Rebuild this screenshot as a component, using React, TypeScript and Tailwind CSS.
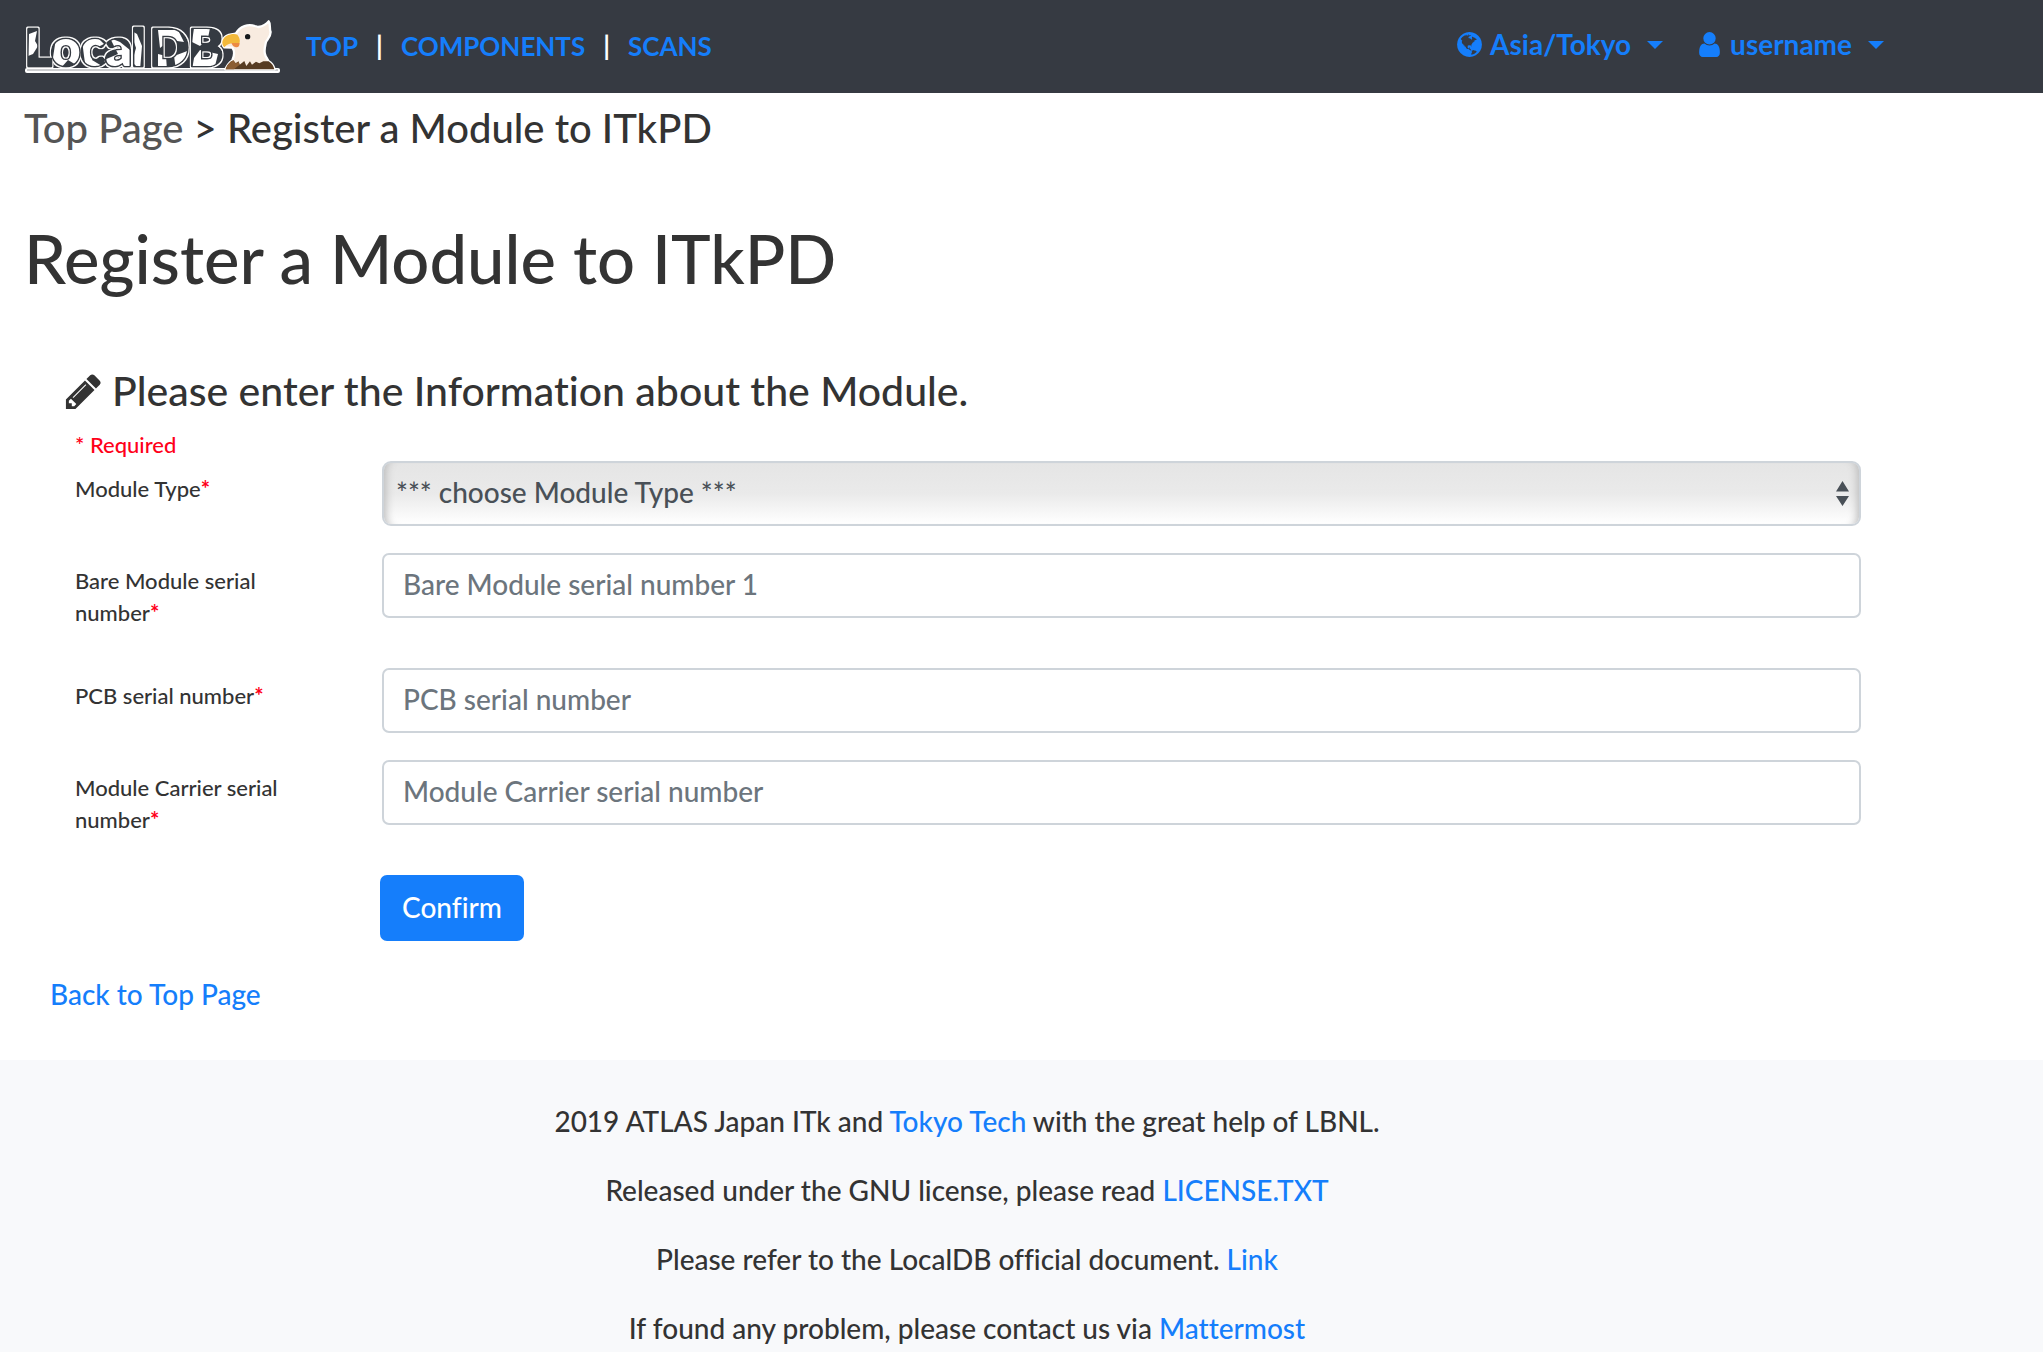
import type { ReactNode } from "react";

const GLOBE =
  "M896 128q209 0 385.5 103t279.5 279.5 103 385.5-103 385.5-279.5 279.5-385.5 103-385.5-103-279.5-279.5-103-385.5 103-385.5 279.5-279.5 385.5-103zm274 521q-2 1-9.5 9.5t-13.5 9.5q2 0 4.5-5t5-11 3.5-7q6-7 22-15 14-6 52-12 34-8 51 11-2-2 9.5-13t14.5-12q3-2 15-4.5t15-7.5l2-22q-12 1-17.5-7t-6.5-21q0 2-6 8 0-7-4.5-8t-11.5 1-9 1q-10-3-15-7.5t-8-16.5-4-15q-2-5-9.5-11t-9.5-10q-1-2-2.5-5.5t-3-6.5-4-5.5-5.5-2.5-7 5-7.5 10-4.5 5q-3-2-6-1.5t-4.5 1-4.5 3-5 3.5q-3 2-8.5 3t-8.5 2q15-5-1-11-10-4-16-3 9-4 7.5-12t-8.5-14h5q-1-4-8.5-8.5t-17.5-8.5-13-6q-8-5-34-9.5t-33-.5q-5 6-4.5 10.5t4 14 3.5 12.5q1 6-5.5 13t-6.5 12q0 7 14 15.5t10 21.5q-3 8-16 16t-16 12q-5 8-1.5 18.5t10.5 16.5q2 2 1.5 4t-3.5 4.5-5.5 4-6.5 3.5l-3 2q-11 5-20.5-6t-13.5-26q-7-25-16-30-23-8-29 1-5-13-41-26-25-9-58-4 6-1 0-15-7-15-19-12 3-6 4-17.5t1-13.5q3-13 12-23 1-1 7-8.5t9.5-13.5.5-6q35 4 50-11 5-5 11.5-17t10.5-17q9-6 14-5.5t14.5 5.5 14.5 5q14 1 15.5-11t-7.5-20q12 1 3-17-4-7-8-9-12-4-27 5-8 4 2 8-1-1-9.5 10.5t-16.5 17.5-16-5q-1-1-5.5-13.5t-9.5-13.5q-8 0-16 15 3-8-11-15t-24-8q19-12-8-27-7-4-20.5-5t-19.5 4q-5 7-5.5 11.5t5 8 10.5 5.5 11.5 4 8.5 3q14 10 8 14-2 1-8.5 3.5t-11.5 4.5-6 4q-3 4 0 14t-2 14q-5-5-9-17.5t-7-16.5q7 9-25 6l-10-1q-4 0-16 2t-20.5 1-13.5-8q-4-8 0-20 1-4 4-2-4-3-11-9.5t-10-8.5q-46 15-94 41 6 1 12-1 5-2 13-6.5t10-5.5q34-14 42-7l5-5q14 16 20 25-7-4-30-1-20 6-22 12 7 12 5 18-4-3-11.5-10t-14.5-11-15-5q-16 0-22 1-146 80-235 222 7 7 12 8 4 1 5 9t2.5 11 11.5-3q9 8 3 19 1-1 44 27 19 17 21 21 3 11-10 18-1-2-9-9t-9-4q-3 5 .5 18.5t10.5 12.5q-7 0-9.5 16t-2.5 35.5-1 23.5l2 1q-3 12 5.5 34.5t21.5 19.5q-13 3 20 43 6 8 8 9 3 2 12 7.5t15 10 10 10.5q4 5 10 22.5t14 23.5q-2 6 9.5 20t10.5 23q-1 0-2.5 1t-2.5 1q3 7 15.5 14t15.5 13q1 3 2 10t3 11 8 2q2-20-24-62-15-25-17-29-3-5-5.5-15.5t-4.5-14.5q2 0 6 1.5t8.5 3.5 7.5 4 2 3q-3 7 2 17.5t12 18.5 17 19 12 13q6 6 14 19.5t0 13.5q9 0 20 10t17 20q5 8 8 26t5 24q2 7 8.5 13.5t12.5 9.5l16 8 13 7q5 2 18.5 10.5t21.5 11.5q10 4 16 4t14.5-2.5 13.5-3.5q15-2 29 15t21 21q36 19 55 11-2 1 .5 7.5t8 15.5 9 14.5 5.5 8.5q5 6 18 15t18 15q6-4 7-9-3 8 7 20t18 10q14-3 14-32-31 15-49-18 0-1-2.5-5.5t-4-8.5-2.5-8.5 0-7.5 5-3q9 0 10-3.5t-2-12.5-4-13q-1-8-11-20t-12-15q-5 9-16 8t-16-9q0 1-1.5 5.5t-1.5 6.5q-13 0-15-1 1-3 2.5-17.5t3.5-22.5q1-4 5.5-12t7.5-14.5 4-12.5-4.5-9.5-17.5-2.5q-19 1-26 20-1 3-3 10.5t-5 11.5-9 7q-7 3-24 2t-24-5q-13-8-22.5-29t-9.5-37q0-10 2.5-26.5t3-25-5.5-24.5q3-2 9-9.5t10-10.5q2-1 4.5-1.5t4.5 0 4-1.5 3-6q-1-1-4-3-3-3-4-3 7 3 28.5-1.5t27.5 1.5q15 11 22-2 0-1-2.5-9.5t-.5-13.5q5 27 29 9 3 3 15.5 5t17.5 5q3 2 7 5.5t5.5 4.5 5-.5 8.5-6.5q10 14 12 24 11 40 19 44 7 3 11 2t4.5-9.5 0-14-1.5-12.5l-1-8v-18l-1-8q-15-3-18.5-12t1.5-18.5 15-18.5q1-1 8-3.5t15.5-6.5 12.5-8q21-19 15-35 7 0 11-9-1 0-5-3t-7.5-5-4.5-2q9-5 2-16 5-3 7.5-11t7.5-10q9 12 21 2 8-8 1-16 5-7 20.5-10.5t18.5-9.5q7 2 8-2t1-12 3-12q4-5 15-9t13-5l17-11q3-4 0-4 18 2 31-11 10-11-6-20 3-6-3-9.5t-15-5.5q3-1 11.5-.5t10.5-1.5q15-10-7-16-17-5-43 12zm-163 877q206-36 351-189-3-3-12.5-4.5t-12.5-3.5q-18-7-24-8 1-7-2.5-13t-8-9-12.5-8-11-7q-2-2-7-6t-7-5.5-7.5-4.5-8.5-2-10 1l-3 1q-3 1-5.5 2.5t-5.5 3-4 3 0 2.5q-21-17-36-22-5-1-11-5.5t-10.5-7-10-1.5-11.5 7q-5 5-6 15t-2 13q-7-5 0-17.5t2-18.5q-3-6-10.5-4.5t-12 4.5-11.5 8.5-9 6.5-8.5 5.5-8.5 7.5q-3 4-6 12t-5 11q-2-4-11.5-6.5t-9.5-5.5q2 10 4 35t5 38q7 31-12 48-27 25-29 40-4 22 12 26 0 7-8 20.5t-7 21.5q0 6 2 16z";

const USER =
  "M1536 1399q0 109-62.5 187t-150.5 78h-854q-88 0-150.5-78t-62.5-187q0-85 8.5-160.5t31.5-152 58.5-131 94-89 134.5-34.5q131 128 313 128t313-128q76 0 134.5 34.5t94 89 58.5 131 31.5 152 8.5 160.5zM1280 512q0 159-112.5 271.5t-271.5 112.5-271.5-112.5-112.5-271.5 112.5-271.5 271.5-112.5 271.5 112.5 112.5 271.5z";

const PENCIL =
  "M491 1536l91-91-235-235-91 91v107h128v128h107zM1014 608q0-22-22-22-10 0-17 7l-542 542q-7 7-7 17 0 22 22 22 10 0 17-7l542-542q7-7 7-17zM960 416l416 416-832 832h-416v-416zM1643 512q0 53-37 90l-166 166-416-416 166-165q36-38 90-38 53 0 91 38l235 234q37 39 37 91z";

function Logo() {
  return (
    <svg viewBox="24 16 258 58" className="h-[58px] w-[258px]" aria-hidden="true">
      <defs>
        <pattern id="patches" width="256" height="60" x="24" y="14" patternUnits="userSpaceOnUse">
          <rect width="256" height="60" fill="#363a42" />
          <path
            d="M5 18L13 15L11 25L14 30L9 38L4 40ZM32 22L50 18L57 30L54 50L44 44L36 53L28 48ZM58 24L72 20L80 28L72 32L68 44L78 50L62 54L60 40ZM86 22L96 26L106 34L106 53L96 50L84 54L80 44L94 38ZM106 14L113 18L118 30L116 54L108 46L112 32ZM134 14L154 14L160 26L146 24L136 32ZM150 40L166 34L162 48L152 54ZM134 38L142 40L143 54L134 54ZM170 12L186 12L184 22L176 30L168 26ZM176 34L194 38L190 54L168 54L170 42Z"
            fill="#fff"
          />
        </pattern>
        <filter id="outline" x="-5%" y="-20%" width="110%" height="140%">
          <feMorphology in="SourceAlpha" operator="dilate" radius="1" result="grown" />
          <feFlood floodColor="#fff" />
          <feComposite in2="grown" operator="in" result="edge" />
          <feMerge>
            <feMergeNode in="edge" />
            <feMergeNode in="SourceGraphic" />
          </feMerge>
        </filter>
      </defs>
      <g
        fontFamily="Lato, sans-serif"
        fontWeight="800"
        fill="url(#patches)"
        stroke="#363a42"
        strokeWidth="3"
        strokeLinejoin="round"
        paintOrder="stroke"
        filter="url(#outline)"
      >
        <text x="25" y="64" fontSize="51">
          Local
        </text>
        <text x="150" y="64" fontSize="51">
          DB
        </text>
      </g>
      <rect x="25" y="66" width="255" height="5" rx="2" fill="#fff" />
      <path d="M27 68h251" stroke="#9b9da1" strokeWidth="1" />
      <g transform="scale(.3333)">
        <path
          d="M676 202C683 186 690 180 697 175C704 160 705 148 697 137L673 136C663 126 666 110 679 102C690 95 702 98 708 94C720 72 745 65 765 72L775 75C790 72 800 66 806 58C813 66 807 80 812 90C812 105 802 112 798 120C794 138 790 150 797 162L806 178C816 184 821 192 824 202Z"
          fill="#f8ebe0"
          stroke="#fff"
          strokeWidth="7"
          strokeLinejoin="round"
        />
        <path d="M677 202C683 186 690 180 700 175L707 184L716 178L719 188L733 177L739 192L750 178L756 188L768 179L778 184L790 178L806 178C816 184 821 192 823 202Z" fill="#573b22" />
        <path d="M677 202C683 186 690 180 700 175L707 184L716 180L719 188L702 202Z" fill="#8b5d33" />
        <path d="M673 136C663 126 666 110 679 102C692 95 706 95 712 98C718 105 722 116 718 124C700 122 684 122 673 136Z" fill="#f2b93b" />
        <path d="M694 123L719 123C719 132 715 137 708 136C701 135 697 130 694 123Z" fill="#ec8a43" />
        <circle cx="743" cy="104" r="8" fill="#15191c" />
      </g>
    </svg>
  );
}

function Icon({ d, className }: { d: string; className: string }) {
  return (
    <svg viewBox="0 0 1792 1792" fill="currentColor" className={className} aria-hidden="true">
      <path d={d} />
    </svg>
  );
}

function NavMenu({ icon, children }: { icon: ReactNode; children: ReactNode }) {
  return (
    <button type="button" className="flex items-center text-[#157efb]">
      {icon}
      <span>{children}</span>
      <span className="ml-4 border-x-8 border-t-8 border-x-transparent border-t-[#157efb]" />
    </button>
  );
}

function Row({ id, label, children }: { id: string; label: string; children: ReactNode }) {
  return (
    <div className="flex items-start">
      <div className="w-[307px] shrink-0 py-3 pr-16 text-[22px] leading-8">
        <label htmlFor={id}>
          {label}
          <span className="font-bold text-[#ff0019]">*</span>
        </label>
      </div>
      <div className="relative min-w-0 grow">{children}</div>
    </div>
  );
}

function TextField({ id, placeholder }: { id: string; placeholder: string }) {
  return (
    <input
      id={id}
      type="text"
      placeholder={placeholder}
      className="block h-[65px] w-full rounded-[7px] border-2 border-[#ced4da] bg-white px-[19px] pb-1 text-[#495057] placeholder:text-[#6c757d]"
    />
  );
}

function A({ children }: { children: ReactNode }) {
  return (
    <a href="#" className="text-[#157efb]">
      {children}
    </a>
  );
}

export default function App() {
  return (
    <div className="flex min-h-screen flex-col bg-white font-['Lato',sans-serif] text-[28px] leading-[43px] font-medium text-[#333] [font-variant-ligatures:none]">
      <nav className="flex h-[93px] items-center bg-[#363a42] pr-[159px] pl-6 font-bold">
        <a href="#" aria-label="LocalDB">
          <Logo />
        </a>
        <div className="ml-6 flex items-center gap-[18px] text-[26px] text-white">
          <A>TOP</A>
          <span>|</span>
          <A>COMPONENTS</A>
          <span>|</span>
          <A>SCANS</A>
        </div>
        <div className="mb-1 ml-auto flex items-center gap-8">
          <NavMenu icon={<Icon d={GLOBE} className="mr-1.5 size-[29px]" />}>Asia/Tokyo</NavMenu>
          <NavMenu icon={<Icon d={USER} className="mr-1.5 size-[29px]" />}>username</NavMenu>
        </div>
      </nav>

      <main className="pb-11">
        <div className="px-6 pt-[11px] text-[40px] leading-[48px]">
          <a href="#" className="text-[#555]">
            Top Page
          </a>{" "}
          &gt; Register a Module to ITkPD
        </div>
        <h1 className="mt-[66px] px-6 text-[67px] leading-[80px]">Register a Module to ITkPD</h1>

        <form className="mt-[69px] mr-[182px] ml-[75px]" onSubmit={(e) => e.preventDefault()}>
          <h2 className="-ml-3 flex items-center text-[41px] leading-[48px]">
            <Icon d={PENCIL} className="mr-2 size-[41px]" />
            Please enter the Information about the Module.
          </h2>
          <p className="mt-3.5 text-[22px] leading-8 text-[#ff0019]">* Required</p>
          <div className="flex flex-col gap-[27px]">
            <Row id="type" label="Module Type">
              <select
                id="type"
                className="block h-[65px] w-full appearance-none rounded-[9px] border-2 border-[#ced4da] bg-linear-to-b from-[#e5e5e5] via-[#eaeaea] to-white px-3 pb-0.5 text-[#495057] shadow-[inset_10px_0_8px_-8px_#bbb,inset_-10px_0_8px_-8px_#bbb]"
              >
                <option>*** choose Module Type ***</option>
              </select>
              <svg
                viewBox="0 0 13 25"
                className="pointer-events-none absolute top-5 right-3 h-[25px] w-[13px]"
                fill="#495057"
                aria-hidden="true"
              >
                <path d="M6.500 0L13 10.500H0ZM6.500 25L13 15H0Z" />
              </svg>
            </Row>
            <Row id="bare" label="Bare Module serial number">
              <TextField id="bare" placeholder="Bare Module serial number 1" />
            </Row>
            <Row id="pcb" label="PCB serial number">
              <TextField id="pcb" placeholder="PCB serial number" />
            </Row>
            <Row id="carrier" label="Module Carrier serial number">
              <TextField id="carrier" placeholder="Module Carrier serial number" />
            </Row>
          </div>
          <button
            type="submit"
            className="mt-[27px] ml-[305px] block h-[66px] rounded-[7px] bg-[#157efb] px-[22px] pb-0.5 text-white"
          >
            Confirm
          </button>
        </form>
        <div className="mt-8 ml-[50px]">
          <A>Back to Top Page</A>
        </div>
      </main>

      <footer className="flex grow flex-col gap-[26px] bg-[#f8f9fb] pt-10 pr-[109px] text-center">
        <p>
          2019 ATLAS Japan ITk and <A>Tokyo Tech</A> with the great help of LBNL.
        </p>
        <p>
          Released under the GNU license, please read <A>LICENSE.TXT</A>
        </p>
        <p>
          Please refer to the LocalDB official document. <A>Link</A>
        </p>
        <p>
          If found any problem, please contact us via <A>Mattermost</A>
        </p>
      </footer>
    </div>
  );
}
